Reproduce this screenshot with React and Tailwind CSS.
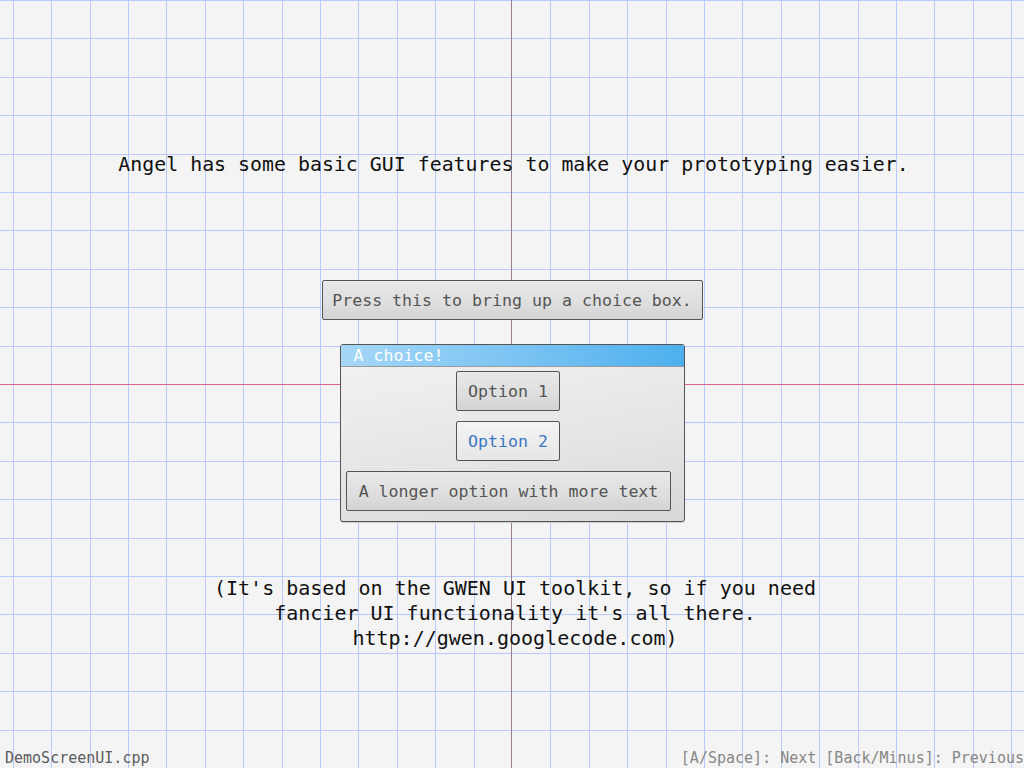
import React from 'react';

const W = 1024;
const H = 768;
const STEP = 38.4;

const GridBackdrop = () => {
  const vLines = [];
  for (let k = 0; k < 27; k++) {
    if (k === 13) continue;
    vLines.push(Math.round(12.8 + k * STEP) + 0.5);
  }
  const hLines = [];
  for (let y = 0; y < H; y += STEP) hLines.push(Math.round(y) + 0.5);

  return (
    <svg className="absolute inset-0" width={W} height={H}>
      {vLines.map(x => (
        <line key={'v' + x} x1={x} y1={0} x2={x} y2={H} stroke="#bac8fb" strokeWidth="1" />
      ))}
      {hLines.map(y => (
        <line key={'h' + y} x1={0} y1={y} x2={W} y2={y} stroke="#bac8fb" strokeWidth="1" />
      ))}
      <line x1={0} y1={384.5} x2={W} y2={384.5} stroke="#e2628f" strokeWidth="1" />
      <line x1={511.5} y1={0} x2={511.5} y2={H} stroke="#9a7f8c" strokeWidth="1" />
    </svg>
  );
};

const GwenButton = ({ children, className = '', hover = false }) => (
  <div
    className={
      'flex items-center justify-center border border-[#555] rounded-[2px] text-[16.6px] leading-[20px] whitespace-nowrap ' +
      (hover
        ? 'bg-[linear-gradient(#f4f4f4,#e6e6e6)] text-[#3a78c6] '
        : 'bg-[linear-gradient(#e8e8e8_0%,#dedede_60%,#d2d2d2_100%)] text-[#555] ') +
      className
    }
  >
    {children}
  </div>
);

const App = () => {
  return (
    <div className="relative w-[1024px] h-[768px] overflow-hidden bg-[#f4f4f4] font-['DejaVu_Sans_Mono',monospace]">
      <GridBackdrop />

      <div className="relative flex flex-col items-center h-full">
        <p className="mt-[153px] pl-[3px] text-[19.9px] leading-[24px] text-[#111] whitespace-nowrap">
          Angel has some basic GUI features to make your prototyping easier.
        </p>

        <GwenButton className="mt-[103px] w-[381px] h-[40px] pt-[1px]">
          Press this to bring up a choice box.
        </GwenButton>

        <div className="mt-[24px] w-[345px] h-[178px] border border-[#555] rounded-[3px] overflow-hidden bg-[linear-gradient(170deg,#f3f3f3_0%,#e6e6e6_55%,#d8d8d8_100%)] flex flex-col shadow-[0_1px_0_#ccc]">
          <div className="h-[22px] bg-[linear-gradient(90deg,#a6d7f7_0%,#7cc4f2_50%,#4db0ee_100%)] border-b border-[#9a9a9a] text-white text-[16.6px] leading-[21px] pl-[13px]">
            A choice!
          </div>
          <div className="flex flex-col items-center pt-[4px] gap-[10px]">
            <GwenButton className="w-[104px] h-[40px] pt-[1px] ml-[-8px]">Option 1</GwenButton>
            <GwenButton hover className="w-[104px] h-[40px] pt-[1px] ml-[-8px]">Option 2</GwenButton>
            <GwenButton className="w-[325px] h-[40px] pt-[1px] ml-[-7px]">A longer option with more text</GwenButton>
          </div>
        </div>

        <div className="mt-[54px] pl-[6px] text-center text-[20px] leading-[25px] text-[#111] whitespace-nowrap">
          <p>(It's based on the GWEN UI toolkit, so if you need</p>
          <p>fancier UI functionality it's all there.</p>
          <p>http://gwen.googlecode.com)</p>
        </div>

        <div className="mt-auto w-full flex justify-between text-[15px] leading-[18px] pb-[1px] whitespace-nowrap">
          <span className="pl-[5px] text-[#5c5c5c]">DemoScreenUI.cpp</span>
          <span className="text-[#878787] shrink-0">[A/Space]: Next [Back/Minus]: Previous</span>
        </div>
      </div>
    </div>
  );
};

export default App;
